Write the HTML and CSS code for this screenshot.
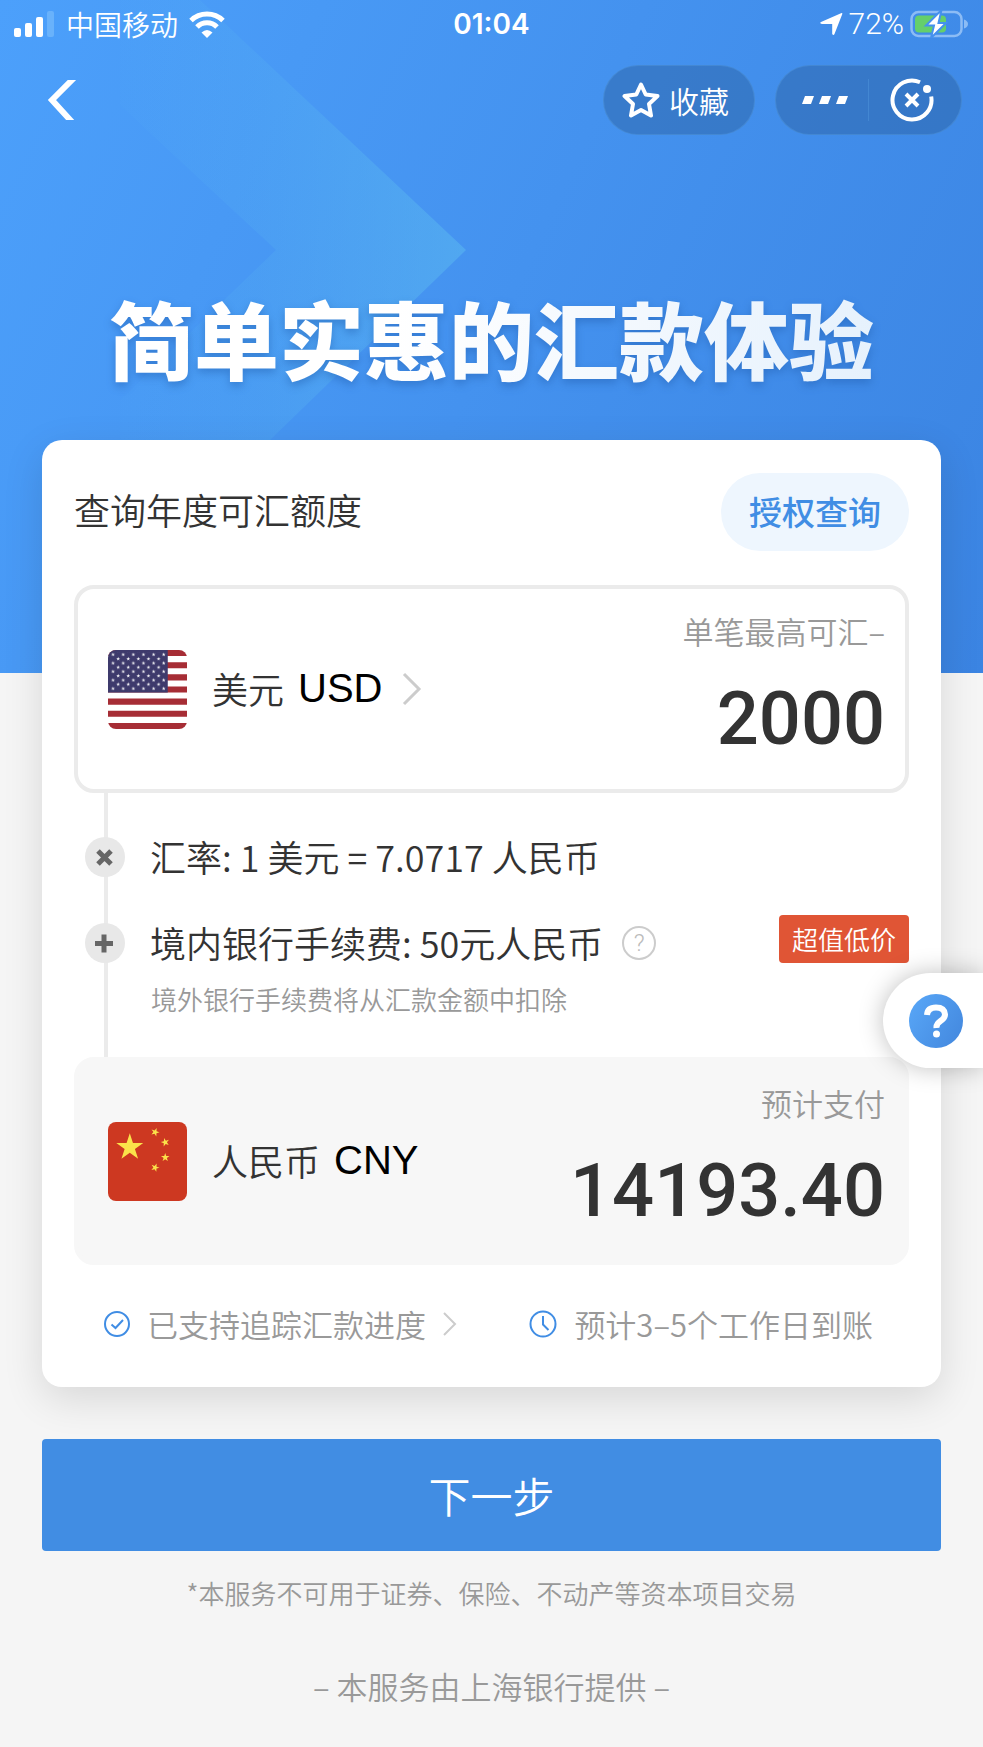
FILE: index.html
```
<!DOCTYPE html>
<html lang="zh-CN">
<head>
  <meta charset="UTF-8" />
  <meta name="viewport" content="width=device-width, initial-scale=1.0" />
  <title>跨境汇款</title>
  <link rel="stylesheet" href="styles.css">
</head>
<body>
  <svg class="defs" aria-hidden="true">
    <defs>
      <polygon id="star" points="0,-10 2.25,-3.09 9.51,-3.09 3.63,1.18 5.88,8.09 0,3.82 -5.88,8.09 -3.63,1.18 -9.51,-3.09 -2.25,-3.09" />
      <pattern id="stars" x="2.5" y="2.3" width="10" height="8.4" patternUnits="userSpaceOnUse">
        <use href="#star" transform="translate(2.5 2.2) scale(.2)" fill="#fff" />
        <use href="#star" transform="translate(7.5 6.4) scale(.2)" fill="#fff" />
      </pattern>
      <linearGradient id="arrowFill" x1="0" x2="1">
        <stop offset="0" stop-color="#5fc0f0" stop-opacity=".04" />
        <stop offset=".4" stop-color="#5fc0f0" stop-opacity=".15" />
        <stop offset="1" stop-color="#5fc0f0" stop-opacity=".45" />
      </linearGradient>
      <linearGradient id="helpFill" x1="0" y1="0.2" x2="1" y2="0.8">
        <stop offset="0" stop-color="#57a5f6" />
        <stop offset="1" stop-color="#4489df" />
      </linearGradient>
    </defs>
  </svg>

  <header class="hero">
    <svg class="hero-arrow" viewBox="0 0 466 500" aria-hidden="true">
      <path d="M120 0H200L466 250L208 500H120V400L276 250L120 105Z" fill="url(#arrowFill)" />
    </svg>

    <div class="status-bar">
      <div class="status-side">
        <svg width="41" height="26" viewBox="0 0 41 26" fill="#fff" aria-hidden="true">
          <rect x="0" y="17" width="7" height="9" rx="2" />
          <rect x="11" y="12" width="7" height="14" rx="2" />
          <rect x="22" y="6" width="7" height="20" rx="2" />
          <rect x="33" y="0" width="7" height="26" rx="2" fill="#69b2fb" />
        </svg>
        <span class="carrier">中国移动</span>
        <svg width="36" height="27" viewBox="0 0 36 27" fill="none" stroke="#fff" stroke-width="5" aria-hidden="true">
          <path d="M2 9.500A23 23 0 0 1 34 9.500" />
          <path d="M8 16A14 14 0 0 1 28 16" />
          <path d="M12.500 21.500Q18 16.500 23.500 21.500L18 27Z" fill="#fff" stroke="none" />
        </svg>
      </div>
      <span class="clock">01:04</span>
      <div class="status-side status-right">
        <svg width="23" height="23" viewBox="0 0 23 23" fill="#fff" aria-hidden="true">
          <path d="M22.400 .8L14.500 21Q13.500 23 12.200 21V11H2Q-1 10.500 1 9L21 .2Q22.500 -.2 22.400 .8Z" />
        </svg>
        <span class="percent">72%</span>
        <svg width="59" height="28" viewBox="0 0 59 28" aria-hidden="true">
          <rect x="1.500" y="2" width="50" height="24" rx="7" fill="none" stroke="#8cbcf5" stroke-width="2.500" />
          <path d="M54 9.500Q58 11 58 14T54 18.500Z" fill="#8cbcf5" />
          <rect x="5" y="5.500" width="31" height="17" rx="4" fill="#65cf6b" />
          <path d="M31.500 0L16 15.500H24L21 28L36 13H28.500Z" fill="#fff" stroke="#4591ee" stroke-width="2" />
        </svg>
      </div>
    </div>

    <nav class="nav-bar">
      <button type="button" class="back" aria-label="返回">
        <svg width="30" height="40" viewBox="0 0 30 40" fill="none" stroke="#fff" stroke-width="6" aria-hidden="true">
          <path d="M27 -2L5 20L25 42" />
        </svg>
      </button>
      <button type="button" class="pill favorite">
        <svg width="38" height="38" viewBox="0 0 38 38" fill="none" stroke="#fff" stroke-width="4" stroke-linejoin="round" aria-hidden="true">
          <path d="M19 3.500L23.700 13.500L35.500 15L27 23L29 34.500L19 29L9 34.500L11 23L2.500 15L14.300 13.500Z" />
        </svg>
        收藏
      </button>
      <div class="pill capsule">
        <button type="button" aria-label="更多">
          <svg width="46" height="8" viewBox="0 0 46 8" fill="#fff" aria-hidden="true">
            <path d="M3 0H12L9 8H0Z" />
            <path d="M20 0H29L26 8H17Z" />
            <path d="M37 0H46L43 8H34Z" />
          </svg>
        </button>
        <button type="button" aria-label="关闭">
          <svg width="44" height="44" viewBox="0 0 44 44" fill="none" stroke="#fff" stroke-width="4" aria-hidden="true">
            <path d="M30 4.200A19.500 19.500 0 1 0 41.200 18.500" />
            <circle cx="37" cy="11" r="4" fill="#fff" stroke="none" />
            <path d="M16 16L28 28M28 16L16 28" />
          </svg>
        </button>
      </div>
    </nav>

    <h1 class="slogan">简单实惠的汇款体验</h1>
  </header>

  <main>
    <form class="page-form">
      <section class="card">
        <div class="quota">
          <span>查询年度可汇额度</span>
          <button type="button" class="btn-quota">授权查询</button>
        </div>

        <div class="money">
          <button type="button" class="currency">
            <svg class="flag" viewBox="0 0 78 78" aria-hidden="true">
              <rect width="78" height="78" fill="#fff" />
              <path d="M0 3H78M0 15H78M0 27H78M0 39H78M0 51H78M0 63H78M0 75H78" stroke="#a62d35" stroke-width="6" />
              <rect width="59" height="42" fill="#3e3a6c" />
              <rect x="2.500" y="2.300" width="54.500" height="38.200" fill="url(#stars)" />
            </svg>
            <span>美元</span>
            <span class="code">USD</span>
            <svg class="go" width="20" height="34" viewBox="0 0 20 34" aria-hidden="true">
              <path d="M2 2L17 17L2 32" />
            </svg>
          </button>
          <div class="amount">
            <label for="amount">单笔最高可汇–</label>
            <input type="text" id="amount" inputmode="decimal" value="2000" />
          </div>
        </div>

        <div class="steps">
          <div class="step">
            <svg class="mark" viewBox="0 0 40 40" aria-hidden="true">
              <circle cx="20" cy="20" r="20" />
              <path d="M13 14L26 27M26 14L13 27" />
            </svg>
            <span>汇率: 1 美元 = 7.0717 人民币</span>
          </div>
          <div class="step">
            <svg class="mark" viewBox="0 0 40 40" aria-hidden="true">
              <circle cx="20" cy="20" r="20" />
              <path d="M10 20.500H28M19 11.500V29.500" />
            </svg>
            <span>境内银行手续费: 50元人民币</span>
            <button type="button" class="tip" aria-label="手续费说明">?</button>
            <span class="badge">超值低价</span>
          </div>
          <p class="step-note">境外银行手续费将从汇款金额中扣除</p>
        </div>

        <div class="money money-total">
          <div class="currency">
            <svg class="flag" viewBox="0 0 78 78" aria-hidden="true">
              <rect width="78" height="78" fill="#cd3821" />
              <g fill="#fbe24a">
                <use href="#star" transform="translate(21.500 25) scale(1.400)" />
                <use href="#star" transform="translate(46.500 10) rotate(20) scale(.44)" />
                <use href="#star" transform="translate(56.500 20) rotate(-15) scale(.44)" />
                <use href="#star" transform="translate(56.500 35) scale(.44)" />
                <use href="#star" transform="translate(46.500 45) rotate(20) scale(.44)" />
              </g>
            </svg>
            <span>人民币</span>
            <span class="code">CNY</span>
          </div>
          <div class="amount">
            <label for="total">预计支付</label>
            <output id="total">14193.40</output>
          </div>
        </div>

        <div class="promises">
          <a href="#" class="promise">
            <svg width="26" height="26" viewBox="0 0 26 26" aria-hidden="true">
              <circle cx="13" cy="13" r="12" />
              <path d="M7.500 13.500L11.500 17L19 9" />
            </svg>
            <span>已支持追踪汇款进度</span>
            <svg class="go" width="14" height="24" viewBox="0 0 14 24" aria-hidden="true">
              <path d="M1 1L12 12L1 23" />
            </svg>
          </a>
          <span class="promise">
            <svg width="28" height="28" viewBox="0 0 28 28" aria-hidden="true">
              <circle cx="14" cy="14" r="12.500" />
              <path d="M14 6V14.500L19.500 20" />
            </svg>
            <span>预计3–5个工作日到账</span>
          </span>
        </div>
      </section>

      <button type="submit" class="btn-next">下一步</button>
    </form>
  </main>

  <footer class="footer">
    <p class="limit">*本服务不可用于证券、保险、不动产等资本项目交易</p>
    <p class="provider">– 本服务由上海银行提供 –</p>
  </footer>

  <button type="button" class="help" aria-label="帮助">
    <svg width="54" height="54" viewBox="0 0 54 54" aria-hidden="true">
      <circle cx="27" cy="27" r="27" fill="url(#helpFill)" />
      <path d="M18 21Q18.500 13.500 27 13.500T36 20.500Q36 24 31.500 27T27.500 34" fill="none" stroke="#fff" stroke-width="6" />
      <circle cx="27.500" cy="40" r="3.500" fill="#fff" />
    </svg>
  </button>
</body>
</html>
```
FILE: styles.css
```
* {
  box-sizing: border-box;
}
body {
  margin: 0;
  background: #f5f5f5;
  color: #333;
  font-family: "Noto Sans CJK SC", sans-serif;
  font-size: 36px;
  font-weight: 350;
  line-height: 48px;
}
button {
  border: 0;
  padding: 0;
  background: none;
  color: inherit;
  font: inherit;
  cursor: pointer;
}
p, h1 {
  margin: 0;
}
svg {
  display: block;
  flex: none;
}
.defs {
  position: absolute;
  width: 0;
  height: 0;
}

/* blue header */
.hero {
  position: relative;
  overflow: hidden;
  padding-bottom: 280px;
  background: linear-gradient(115deg, #4ca0fb 0%, #4492ef 50%, #3b84e2 100%);
  color: #fff;
}
.hero-arrow {
  position: absolute;
  left: 0;
  top: 0;
  width: 466px;
}
.status-bar {
  position: relative;
  display: grid;
  grid-template-columns: 1fr auto 1fr;
  align-items: center;
  height: 48px;
  padding: 0 14px;
  font-size: 28px;
}
.status-side {
  display: flex;
  align-items: center;
  gap: 11px;
}
.status-right {
  justify-content: flex-end;
  gap: 6px;
}
.clock {
  font-family: Inter, sans-serif;
  font-weight: 600;
}
.percent {
  font-family: Roboto, sans-serif;
  font-size: 30px;
}
.nav-bar {
  position: relative;
  display: flex;
  align-items: center;
  gap: 20px;
  padding: 17px 21px 0 47px;
}
.back {
  margin-right: auto;
}
.pill {
  display: flex;
  align-items: center;
  height: 70px;
  border: 1px solid rgba(80, 150, 220, 0.5);
  border-radius: 35px;
  background: rgba(40, 90, 150, 0.4);
}
.favorite {
  gap: 9px;
  padding: 0 25px 0 18px;
  font-size: 30px;
}
.capsule {
  width: 187px;
  padding: 0 6px;
}
.capsule button {
  display: flex;
  flex: 1;
  align-items: center;
  justify-content: center;
  height: 42px;
}
.capsule button + button {
  border-left: 1px solid rgba(80, 150, 220, 0.5);
}
.slogan {
  position: relative;
  margin-top: 146px;
  background: linear-gradient(100deg, #fff 40%, #e0eefc 100%);
  -webkit-background-clip: text;
  background-clip: text;
  color: transparent;
  filter: drop-shadow(0 4px 4px rgba(30, 90, 170, 0.45));
  font-size: 85px;
  font-weight: 900;
  line-height: 112px;
  text-align: center;
  white-space: nowrap;
}

/* card */
.page-form {
  position: relative;
  margin: -233px 42px 0;
}
.card {
  padding: 33px 32px 39px;
  border-radius: 20px;
  background: #fff;
  box-shadow: 0 12px 40px rgba(0, 0, 0, 0.12);
}
.quota {
  display: flex;
  align-items: center;
  justify-content: space-between;
  margin-bottom: 34px;
}
.quota span {
  padding-bottom: 6px;
}
.btn-quota {
  height: 78px;
  padding: 0 28px 2px;
  border-radius: 39px;
  background: #eef6fe;
  color: #408de4;
  font-size: 33px;
  font-weight: 500;
}
.money {
  display: flex;
  align-items: center;
  justify-content: space-between;
  height: 208px;
  padding: 0 20px 0 30px;
  border: 4px solid #ebebeb;
  border-radius: 20px;
}
.money-total {
  border-color: #f7f7f7;
  background: #f7f7f7;
}
.currency {
  display: flex;
  align-items: center;
}
.currency span {
  padding-bottom: 2px;
}
.flag {
  width: 79px;
  height: 79px;
  margin-right: 25px;
  border-radius: 8px;
}
.code {
  margin-left: 14px;
  color: #000;
  font-family: "Liberation Sans", Arial, sans-serif;
  font-size: 40px;
}
.go {
  margin-left: 20px;
  fill: none;
  stroke: #ccc;
  stroke-width: 3;
}
.amount {
  display: flex;
  flex-direction: column;
  align-items: flex-end;
  gap: 28px;
  padding-bottom: 12px;
}
.amount label {
  color: #999;
  font-size: 31px;
  line-height: 44px;
}
.amount input, .amount output {
  width: 360px;
  height: 76px;
  padding: 0;
  border: 0;
  outline: 0;
  background: none;
  color: #333;
  font-family: Roboto, sans-serif;
  font-size: 74px;
  font-weight: 500;
  line-height: 76px;
  text-align: right;
}

/* rate and fee, hung on the vertical line */
.steps {
  margin-left: 30px;
  padding: 40px 0 40px 43px;
  border-left: 4px solid #ebebeb;
}
.step {
  display: flex;
  align-items: center;
  height: 48px;
}
.step + .step {
  margin-top: 38px;
}
.step span {
  padding-bottom: 2px;
}
.mark {
  width: 40px;
  height: 40px;
  margin: 0 25px 0 -66px;
  fill: #e8e8e8;
}
.mark path {
  stroke: #666;
  stroke-width: 5;
}
.tip {
  width: 34px;
  height: 34px;
  margin-left: 19px;
  border: 2px solid #ccc;
  border-radius: 50%;
  color: #bbb;
  font-family: Roboto, sans-serif;
  font-size: 24px;
  line-height: 30px;
}
.step .badge {
  margin: 0 0 8px auto;
  padding: 0 13px;
  border-radius: 4px;
  background: #e05535;
  color: #fff;
  font-size: 26px;
}
.step-note {
  margin-top: 14px;
  color: #999;
  font-size: 26px;
  line-height: 36px;
}

.promises {
  display: flex;
  justify-content: space-between;
  margin-top: 35px;
  padding: 0 36px 0 30px;
}
.promise {
  display: flex;
  align-items: center;
  height: 48px;
  color: #999;
  font-size: 31px;
  text-decoration: none;
}
.promise svg {
  margin-right: 17px;
  fill: none;
  stroke: #408de4;
  stroke-width: 2;
}
.promise .go {
  margin: 0 0 0 17px;
  stroke: #ccc;
}

.btn-next {
  width: 100%;
  height: 112px;
  margin-top: 52px;
  border-radius: 4px;
  background: #418de3;
  color: #fff;
  font-size: 42px;
}

.footer {
  padding-bottom: 30px;
  color: #999;
  text-align: center;
}
.limit {
  margin-top: 18px;
  font-size: 26px;
}
.provider {
  margin-top: 45px;
  font-size: 31px;
}

/* floating help tab */
.help {
  position: absolute;
  right: 0;
  top: 973px;
  width: 100px;
  height: 95px;
  padding-left: 26px;
  border-radius: 48px 0 0 48px;
  background: #fff;
  box-shadow: 0 0 24px rgba(0, 0, 0, 0.25);
}
```
